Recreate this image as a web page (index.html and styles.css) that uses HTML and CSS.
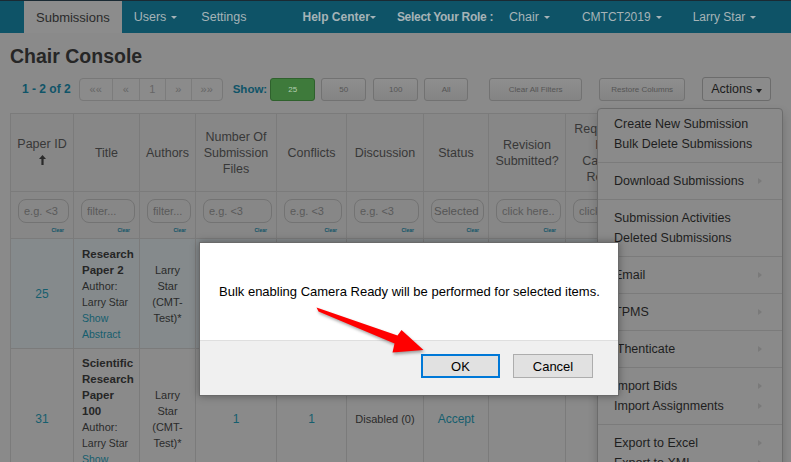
FILE: index.html
```html
<!DOCTYPE html>
<html lang="en">
<head>
<meta charset="utf-8">
<title>Chair Console</title>
<link rel="stylesheet" href="styles.css">
</head>
<body>
<nav class="topnav">
  <a class="nav-item active">Submissions</a>
  <a class="nav-item">Users<span class="caret"></span></a>
  <a class="nav-item">Settings</a>
  <div class="nav-right">
    <a class="rnav bold help">Help Center<span class="caret tight"></span></a>
    <span class="rnav bold role">Select Your Role :</span>
    <a class="rnav chair">Chair<span class="caret"></span></a>
    <a class="rnav conf">CMTCT2019<span class="caret"></span></a>
    <a class="rnav user">Larry Star<span class="caret"></span></a>
  </div>
</nav>

<main class="content">
  <h1 class="title">Chair Console</h1>
  <div class="toolbar">
    <span class="count">1 - 2 of 2</span>
    <div class="pager">
      <span class="pg w33">««</span>
      <span class="pg w27">«</span>
      <span class="pg w26">1</span>
      <span class="pg w26">»</span>
      <span class="pg w31">»»</span>
    </div>
    <span class="show">Show:</span>
    <button class="btn small green b25">25</button>
    <button class="btn small b50">50</button>
    <button class="btn small b100">100</button>
    <button class="btn small ball">All</button>
    <button class="btn small bclear">Clear All Filters</button>
    <button class="btn small brestore">Restore Columns</button>
    <button class="btn actions">Actions<span class="caret dark"></span></button>
  </div>

  <table class="grid">
    <colgroup>
      <col class="c-id"><col class="c-title"><col class="c-auth"><col class="c-files"><col class="c-conf"><col class="c-disc"><col class="c-status"><col class="c-rev"><col class="c-req"><col class="c-more">
    </colgroup>
    <thead>
      <tr class="head">
        <th>Paper ID<br><svg class="sort" width="7" height="10" viewBox="0 0 7 10"><path d="M3.5 0 L7 4 L4.6 4 L4.6 10 L2.4 10 L2.4 4 L0 4 Z" fill="#2a2a2a"/></svg></th>
        <th>Title</th>
        <th>Authors</th>
        <th>Number Of Submission Files</th>
        <th>Conflicts</th>
        <th>Discussion</th>
        <th>Status</th>
        <th>Revision Submitted?</th>
        <th>Requested<br>For<br>Camera<br>Ready</th>
        <th>Camera Ready Submitted?</th>
      </tr>
      <tr class="filters">
        <td><input class="flt" placeholder="e.g. &lt;3"><a class="clr">Clear</a></td>
        <td><input class="flt" placeholder="filter..."><a class="clr">Clear</a></td>
        <td><input class="flt" placeholder="filter..."><a class="clr">Clear</a></td>
        <td><input class="flt" placeholder="e.g. &lt;3"><a class="clr">Clear</a></td>
        <td><input class="flt" placeholder="e.g. &lt;3"><a class="clr">Clear</a></td>
        <td><input class="flt" placeholder="e.g. &lt;3"><a class="clr">Clear</a></td>
        <td><div class="flt sel">Selected</div><a class="clr">Clear</a></td>
        <td><input class="flt" placeholder="click here.."><a class="clr">Clear</a></td>
        <td><input class="flt" placeholder="click here.."><a class="clr">Clear</a></td>
        <td><input class="flt" placeholder="click here.."><a class="clr">Clear</a></td>
      </tr>
    </thead>
    <tbody>
      <tr class="row sel-row r1">
        <td class="link">25</td>
        <td class="tcell"><b>Research<br>Paper 2</b><span class="au">Author:</span><span class="nm">Larry Star</span><a class="abs">Show<br>Abstract</a></td>
        <td class="auth">Larry Star (CMT-Test)*</td>
        <td class="link">1</td>
        <td class="link">1</td>
        <td class="txt">Disabled (0)</td>
        <td class="link acc">Accept</td>
        <td></td>
        <td></td>
        <td></td>
      </tr>
      <tr class="row r2">
        <td class="link">31</td>
        <td class="tcell"><b>Scientific<br>Research<br>Paper<br>100</b><span class="au">Author:</span><span class="nm">Larry Star</span><a class="abs">Show<br>Abstract</a></td>
        <td class="auth">Larry Star (CMT-Test)*</td>
        <td class="link">1</td>
        <td class="link">1</td>
        <td class="txt">Disabled (0)</td>
        <td class="link acc">Accept</td>
        <td></td>
        <td></td>
        <td></td>
      </tr>
    </tbody>
  </table>
</main>

<ul class="menu">
  <li class="mi">Create New Submission</li>
  <li class="mi">Bulk Delete Submissions</li>
  <li class="div"></li>
  <li class="mi sub">Download Submissions</li>
  <li class="div"></li>
  <li class="mi">Submission Activities</li>
  <li class="mi">Deleted Submissions</li>
  <li class="div"></li>
  <li class="mi sub">Email</li>
  <li class="div"></li>
  <li class="mi sub">TPMS</li>
  <li class="div"></li>
  <li class="mi sub">iThenticate</li>
  <li class="div"></li>
  <li class="mi sub">Import Bids</li>
  <li class="mi sub">Import Assignments</li>
  <li class="div"></li>
  <li class="mi sub">Export to Excel</li>
  <li class="mi sub">Export to XML</li>
</ul>

<div class="dialog" role="dialog">
  <div class="dlg-body">Bulk enabling Camera Ready will be performed for selected items.</div>
  <div class="dlg-foot">
    <button class="dbtn ok">OK</button>
    <button class="dbtn">Cancel</button>
  </div>
</div>

<svg class="arrow" width="140" height="70" viewBox="0 0 140 70">
  <path d="M16.5 12.5 L97.5 40.5 L101.5 35 L123.5 55 L92.5 57.5 L94.5 48.5 L18.5 16.5 Z" fill="#ff0000"/>
</svg>
</body>
</html>
```

FILE: styles.css
```css
* { box-sizing: border-box; }

html, body {
  margin: 0;
  width: 791px;
  height: 462px;
  overflow: hidden;
}

body {
  position: relative;
  background: #8a8a8a;
  font-family: "Liberation Sans", Arial, sans-serif;
  color: #262626;
}

a { text-decoration: none; cursor: pointer; }

/* ---------- top navigation ---------- */
.topnav {
  display: flex;
  align-items: stretch;
  height: 33px;
  padding-left: 24px;
  background: #0e5367;
  border-top: 1px solid #1a2a33;
}

.nav-item {
  display: flex;
  align-items: center;
  padding: 0 12px;
  color: #a6b3b7;
  font-size: 12.5px;
}

.nav-item.active {
  background: #8c8c8c;
  color: #2a2a2a;
  font-size: 13px;
}

.nav-right {
  display: flex;
  align-items: stretch;
}

.rnav {
  display: flex;
  align-items: center;
  color: #a6b3b7;
  font-size: 12.5px;
}

.rnav.bold { font-weight: bold; font-size: 12px; }
.help { margin-left: 44px; }
.role { margin-left: 21px; letter-spacing: -0.3px; }
.chair { margin-left: 16px; }
.conf { margin-left: 32px; font-size: 12px; }
.user { margin-left: 31px; font-size: 12px; }

.caret {
  display: inline-block;
  width: 0;
  height: 0;
  margin-left: 5px;
  border-top: 3px solid currentColor;
  border-left: 3px solid transparent;
  border-right: 3px solid transparent;
}
.caret.tight { margin-left: 0; }
.caret.dark { margin-left: 4px; border-top-width: 4px; border-left-width: 3.5px; border-right-width: 3.5px; color: #1e1e1e; }

/* ---------- content ---------- */
.content { padding: 0 10px; }

.title {
  margin: 11px 0 0;
  font-size: 19.5px;
  line-height: 24px;
  font-weight: bold;
  color: #262626;
}

.toolbar {
  display: flex;
  align-items: center;
  height: 24px;
  margin-top: 9px;
}

.count {
  margin-left: 12px;
  font-size: 12px;
  font-weight: bold;
  color: #0f5468;
}

.pager {
  display: flex;
  margin-left: 8px;
  height: 23px;
  border: 1px solid #787878;
  border-radius: 4px;
  overflow: hidden;
  background: #8b8b8b;
}

.pg {
  display: flex;
  align-items: center;
  justify-content: center;
  font-size: 11px;
  color: #666;
  border-left: 1px solid #7c7c7c;
}
.pg:first-child { border-left: 0; }
.w33 { width: 32px; }
.w27 { width: 27px; }
.w26 { width: 26px; }
.w31 { width: 31px; }

.show {
  margin-left: 10px;
  font-size: 11.5px;
  font-weight: bold;
  color: #0f5468;
}

.btn {
  height: 23px;
  padding: 0;
  border: 1px solid #727272;
  border-radius: 3px;
  background: linear-gradient(#8e8e8e, #848484);
  font-family: inherit;
  color: #555;
}

.btn.small { font-size: 8px; }
.btn.green {
  background: #3e7a3b;
  border-color: #2f612d;
  color: #b3ceb1;
}
.b25 { margin-left: 3px; width: 45px; }
.b50 { margin-left: 6px; width: 45px; }
.b100 { margin-left: 7px; width: 45px; }
.ball { margin-left: 6px; width: 44px; }
.bclear { margin-left: 21px; width: 93px; }
.brestore { margin-left: 17px; width: 86px; }

.btn.actions {
  margin-left: 17px;
  width: 69px;
  height: 24px;
  margin-top: -1px;
  font-size: 12.5px;
  color: #1c1c1c;
  border-color: #6c6c6c;
  background: #8b8b8b;
}

/* ---------- grid ---------- */
.grid {
  margin-top: 12px;
  border-collapse: collapse;
  table-layout: fixed;
  width: 711px;
}

.c-id { width: 63px; }
.c-title { width: 66px; }
.c-auth { width: 56px; }
.c-files { width: 81px; }
.c-conf { width: 70px; }
.c-disc { width: 77px; }
.c-status { width: 65px; }
.c-rev { width: 77px; }
.c-req { width: 78px; }
.c-more { width: 78px; }

.grid th, .grid td {
  border: 1px solid #7b7b7b;
}

.head th {
  height: 78px;
  padding: 0 4px;
  background: #878787;
  font-weight: normal;
  font-size: 12.5px;
  line-height: 16px;
  color: #383838;
  text-align: center;
  vertical-align: middle;
  overflow: hidden;
  white-space: normal;
}

.sort { display: inline-block; margin-top: 3px; }

.filters td {
  height: 47px;
  padding: 7px 4px 0 7px;
  vertical-align: top;
  background: #878787;
}

.flt {
  display: block;
  width: 100%;
  height: 24px;
  margin: 0;
  padding: 0 2px 0 5px;
  border: 1px solid #737373;
  border-radius: 8px;
  background: transparent;
  font-family: inherit;
  font-size: 11px;
  color: #4a4a4a;
  outline: none;
}
.flt::placeholder { color: #5a5a5a; }
.flt.sel {
  padding: 0 2px;
  line-height: 22px;
  font-size: 11.5px;
  color: #555;
  white-space: nowrap;
  overflow: hidden;
}

.clr {
  display: block;
  margin-top: 4px;
  padding-right: 5px;
  text-align: right;
  font-size: 5px;
  font-weight: bold;
  line-height: 6px;
  color: #0f5468;
}

.row td {
  padding: 6px 5px;
  text-align: center;
  vertical-align: middle;
  font-size: 12px;
  line-height: 16px;
}

.r1 td { padding-top: 7px; }

.sel-row td { background: #858a8c; }

.link { color: #155e6e; }
.txt { font-size: 11px !important; color: #2a2a2a; }

.tcell { text-align: left !important; padding-left: 8px !important; }
.tcell b { display: block; font-size: 11.5px; color: #262626; }
.au { display: block; font-size: 11px; color: #2a2a2a; }
.nm { display: block; font-size: 10.5px; color: #2a2a2a; }
.abs { display: block; font-size: 10.5px; color: #155e6e; }

.auth { font-size: 11px !important; color: #2a2a2a; }

/* ---------- actions dropdown ---------- */
.menu {
  position: absolute;
  left: 597px;
  top: 108px;
  width: 186px;
  margin: 0;
  padding: 5px 0;
  list-style: none;
  background: #8a8a8a;
  border: 1px solid #6c6c6c;
  border-radius: 4px;
  box-shadow: 0 5px 10px rgba(0, 0, 0, 0.18);
}

.mi {
  display: flex;
  align-items: center;
  justify-content: space-between;
  height: 20px;
  padding: 0 20px 0 16px;
  font-size: 12.5px;
  color: #1e1e1e;
  white-space: nowrap;
}

.mi.sub::after {
  content: "";
  width: 0;
  height: 0;
  border-left: 4px solid #7a7a7a;
  border-top: 3.5px solid transparent;
  border-bottom: 3.5px solid transparent;
}

.div {
  height: 1px;
  margin: 8px 0;
  background: #7b7b7b;
}

/* ---------- dialog ---------- */
.dialog {
  position: absolute;
  left: 199px;
  top: 242px;
  width: 420px;
  height: 154px;
  display: flex;
  flex-direction: column;
  background: #fff;
  border: 1px solid #6a6a6a;
  box-shadow: 0 0 8px rgba(0, 0, 0, 0.35);
  font-family: "Liberation Sans", Arial, sans-serif;
}

.dlg-body {
  height: 97px;
  display: flex;
  align-items: center;
  padding-left: 19px;
  font-size: 13px;
  color: #000;
}

.dlg-foot {
  flex: 1;
  display: flex;
  justify-content: flex-end;
  align-items: flex-start;
  gap: 13px;
  padding: 13px 25px 0 0;
  background: #f0f0f0;
  border-top: 1px solid #dfdfdf;
}

.dbtn {
  width: 80px;
  height: 24px;
  padding: 0;
  border: 1px solid #adadad;
  background: #e1e1e1;
  font-family: inherit;
  font-size: 13px;
  color: #000;
}

.dbtn.ok {
  width: 79px;
  border: 2px solid #0078d7;
}

/* ---------- annotation arrow ---------- */
.arrow {
  position: absolute;
  left: 300px;
  top: 295px;
  filter: drop-shadow(1px 2px 1.5px rgba(0, 0, 0, 0.35));
}
```
